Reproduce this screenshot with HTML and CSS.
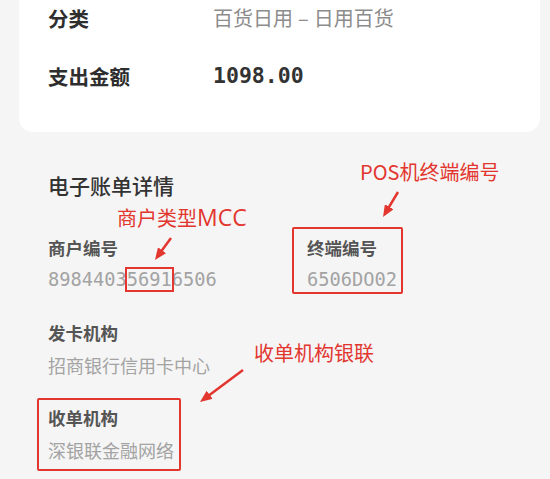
FILE: index.html
```html
<!DOCTYPE html>
<html lang="zh-CN">
<head>
<meta charset="utf-8">
<link rel="stylesheet" href="styles.css">
</head>
<body>
<div class="page">
  <div class="card">
    <div class="row">
      <div class="row-label">分类</div>
      <div class="row-value">百货日用<span class="dash">–</span>日用百货</div>
    </div>
    <div class="row">
      <div class="row-label">支出金额</div>
      <div class="row-amount">1098.00</div>
    </div>
  </div>

  <div class="details">
    <div class="details-title">电子账单详情</div>
    <div class="pair">
      <div class="item">
        <div class="item-label">商户编号</div>
        <div class="item-code">8984403<span class="mark">5691</span>6506</div>
      </div>
      <div class="item boxed boxed-term">
        <div class="item-label">终端编号</div>
        <div class="item-code">6506DO02</div>
      </div>
    </div>
    <div class="item">
      <div class="item-label">发卡机构</div>
      <div class="item-value">招商银行信用卡中心</div>
    </div>
    <div class="item boxed boxed-acq">
      <div class="item-label">收单机构</div>
      <div class="item-value">深银联金融网络</div>
    </div>
  </div>

  <div class="note note-pos">POS机终端编号</div>
  <div class="note note-mcc">商户类型<span class="note-latin">MCC</span></div>
  <div class="note note-acq">收单机构银联</div>

  <svg class="arrows" width="550" height="479" viewBox="0 0 550 479">
    <defs>
      <marker id="head" viewBox="0 0 12 10" markerWidth="12" markerHeight="10" refX="6" refY="5" markerUnits="userSpaceOnUse" orient="auto">
        <path d="M0,0 L12,5 L0,10 z" fill="#e2362f"/>
      </marker>
    </defs>
    <line x1="171" y1="238" x2="158.5" y2="255.1" stroke="#e2362f" stroke-width="2.5" marker-end="url(#head)"/>
    <line x1="398" y1="192" x2="386.1" y2="211.9" stroke="#e2362f" stroke-width="2.5" marker-end="url(#head)"/>
    <line x1="243" y1="370" x2="204.8" y2="398.4" stroke="#e2362f" stroke-width="2.5" marker-end="url(#head)"/>
  </svg>
</div>
</body>
</html>
```

FILE: styles.css
```css
* { box-sizing: border-box; }

html, body {
  margin: 0;
  padding: 0;
}

body {
  background: #f5f5f5;
  font-family: "Noto Sans CJK SC", "Noto Sans", sans-serif;
  color: #333;
}

.page {
  position: relative;
  width: 550px;
  height: 479px;
  overflow: hidden;
}

.card {
  margin: 0 10px 0 19px;
  height: 132px;
  padding: 3px 0 0 29px;
  background: #fff;
  border-radius: 0 0 14px 14px;
}

.row {
  display: grid;
  grid-template-columns: 165px 1fr;
  height: 58px;
  align-items: start;
}

.row-label {
  font-size: 20.5px;
  line-height: 30px;
  font-weight: 700;
  color: #2e2e2e;
}

.row-value {
  font-size: 20px;
  line-height: 30px;
  color: #8c8c8c;
}

.dash {
  display: inline-block;
  padding: 0 5px;
}

.row-amount {
  font-family: "DejaVu Sans Mono", "Liberation Mono", monospace;
  font-size: 21.5px;
  line-height: 30px;
  font-weight: 700;
  color: #333;
}

.details {
  padding: 38px 0 0 48px;
  display: flex;
  flex-direction: column;
  align-items: flex-start;
}

.details-title {
  font-size: 21px;
  line-height: 30px;
  font-weight: 500;
  color: #333;
  margin-bottom: 35px;
}

.pair {
  display: grid;
  grid-template-columns: 259px auto;
  margin-bottom: 27px;
}

.item {
  display: flex;
  flex-direction: column;
  gap: 6px;
  margin-bottom: 27px;
}

.pair .item { margin-bottom: 0; }

.item-label {
  font-size: 17.5px;
  line-height: 26px;
  font-weight: 700;
  color: #555;
}

.item-value {
  font-size: 18px;
  line-height: 26px;
  color: #a3a3a3;
}

.item-code {
  font-family: "DejaVu Sans Mono", "Liberation Mono", monospace;
  font-size: 18.7px;
  line-height: 26px;
  color: #a3a3a3;
}

.mark {
  outline: 2px solid #e2362f;
  outline-offset: 0;
}

.boxed { position: relative; }

.boxed::after {
  content: "";
  position: absolute;
  border: 2px solid #e2362f;
  border-radius: 2px;
}

.boxed-term::after {
  left: -15px;
  top: -8px;
  right: -6px;
  bottom: -1px;
}

.boxed-acq::after {
  left: -11px;
  top: -7px;
  right: -7px;
  bottom: -8px;
}

.note {
  position: absolute;
  font-size: 20px;
  line-height: 28px;
  color: #e2362f;
  white-space: nowrap;
}

.note-latin {
  font-family: "Open Sans", "Noto Sans", sans-serif;
  font-size: 23px;
}

.note-pos { left: 360px; top: 158px; }
.note-mcc { left: 117px; top: 203px; }
.note-acq { left: 254px; top: 339px; }

.arrows {
  position: absolute;
  left: 0;
  top: 0;
  pointer-events: none;
}
```
